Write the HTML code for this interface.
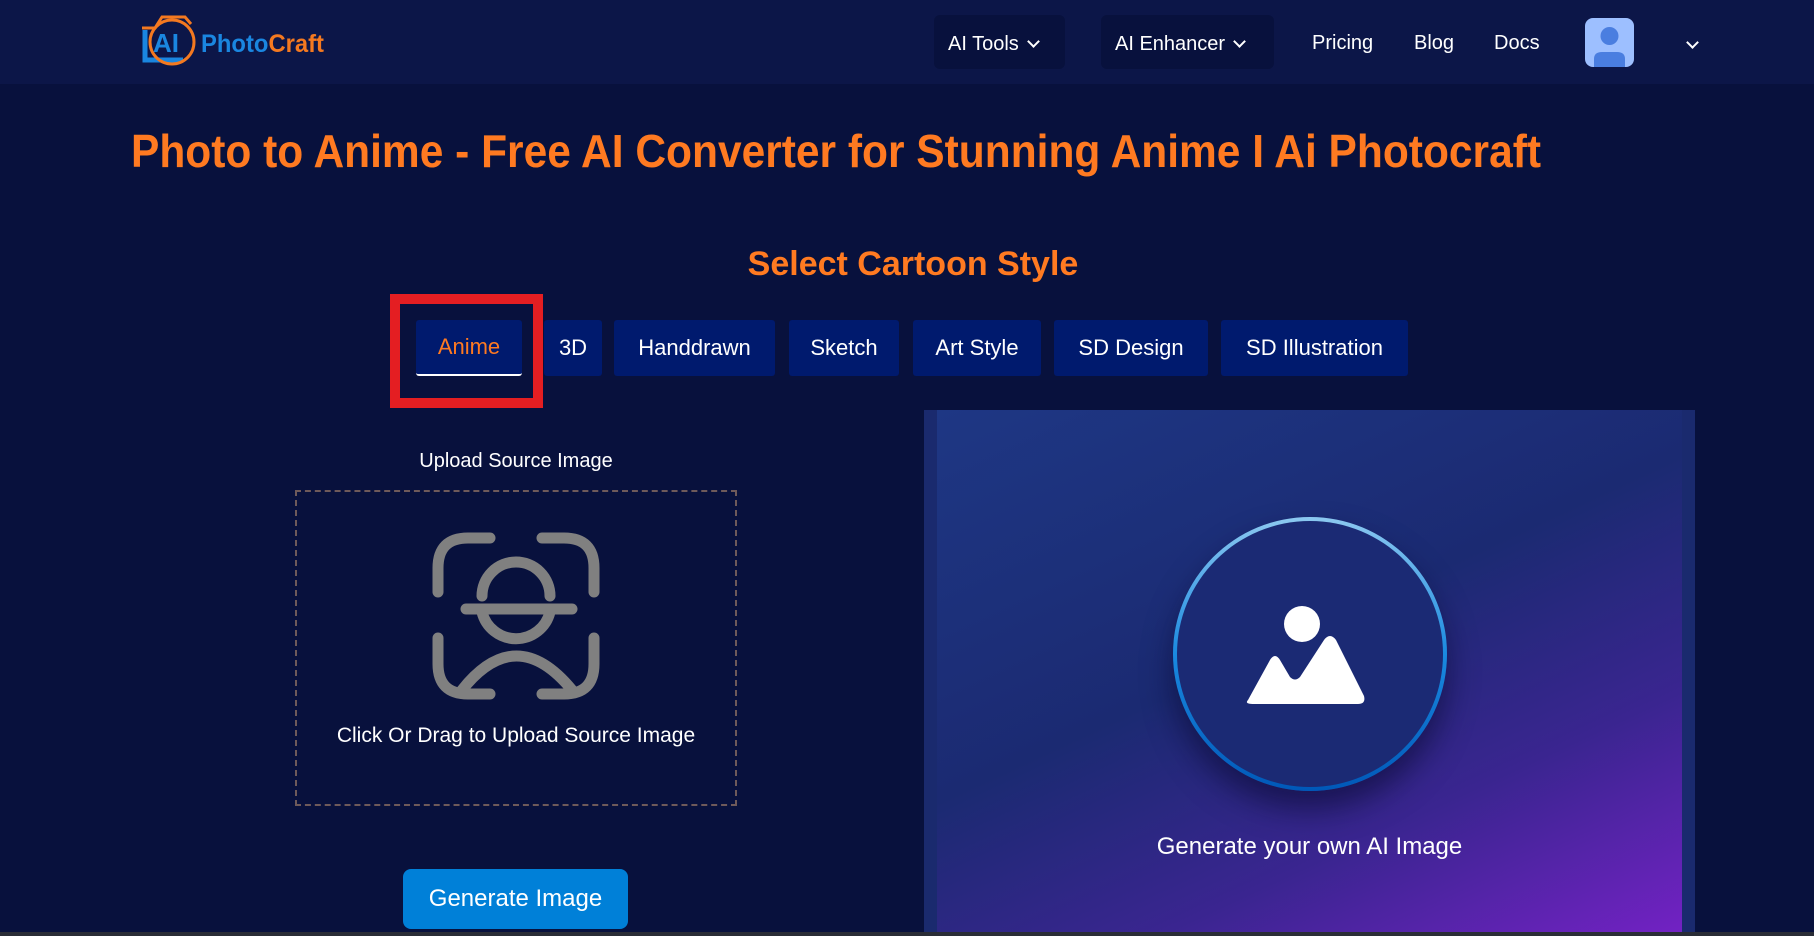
<!DOCTYPE html>
<html><head><meta charset="utf-8"><style>
*{box-sizing:border-box;margin:0;padding:0}
body{width:1814px;height:936px;overflow:hidden;background:#08113d;font-family:"Liberation Sans",Arial,sans-serif;color:#fff;position:relative}
.hdr{position:absolute;left:0;top:0;width:1814px;height:84px;background:#0c1648}
.abs{position:absolute}
.navbox{position:absolute;top:15px;height:54px;background:#08113d;border-radius:6px;font-size:20px;display:flex;align-items:center;padding-left:14px;padding-top:4px}
.navlink{position:absolute;top:32px;font-size:20px}
.chev{display:inline-block;width:9px;height:9px;border-right:2px solid #fff;border-bottom:2px solid #fff;transform:rotate(45deg);margin-left:10px;margin-top:-6px}
.tab{position:absolute;top:320px;height:56px;background:#001a6e;border-radius:3px;font-size:22px;display:flex;align-items:center;justify-content:center}
</style></head><body>
<div class="hdr"></div>
<svg class="abs" style="left:137px;top:8px" width="200" height="60" viewBox="0 0 200 60">
<path d="M8 22 L8 52 L46 52" stroke="#1a86e0" stroke-width="5" fill="none"/>
<path d="M5 20 L18 20 L25 9 L48 9 L54 16" stroke="#f47920" stroke-width="3" fill="none"/>
<circle cx="35" cy="34" r="22" stroke="#f47920" stroke-width="3" fill="none"/>
<text x="16" y="44" font-family="Liberation Sans" font-weight="bold" font-size="26" fill="#1a86e0">AI</text>
<text x="64" y="44" textLength="123" lengthAdjust="spacingAndGlyphs" font-family="Liberation Sans" font-weight="bold" font-size="25" fill="#1a86e0">Photo<tspan fill="#f47920">Craft</tspan></text>
</svg>
<div class="navbox" style="left:934px;width:131px">AI Tools<span class="chev"></span></div>
<div class="navbox" style="left:1101px;width:173px">AI Enhancer<span class="chev"></span></div>
<div class="navlink" style="left:1312px">Pricing</div>
<div class="navlink" style="left:1414px">Blog</div>
<div class="navlink" style="left:1494px">Docs</div>
<svg class="abs" style="left:1585px;top:18px" width="49" height="49" viewBox="0 0 49 49">
<rect width="49" height="49" rx="8" fill="#9dbfff"/>
<circle cx="24.5" cy="18" r="9" fill="#4a7ee0"/>
<path d="M9 49 L9 41 Q9 34 17 34 L32 34 Q40 34 40 41 L40 49Z" fill="#4a7ee0"/>
</svg>
<span class="chev abs" style="left:1678px;top:44px"></span>

<svg class="abs" style="left:128px;top:118px" width="1440" height="70">
<text x="3" y="49" textLength="1410" lengthAdjust="spacingAndGlyphs" font-family="Liberation Sans" font-weight="bold" font-size="46" fill="#ff7a21">Photo to Anime - Free AI Converter for Stunning Anime I Ai Photocraft</text>
</svg>

<div class="abs" style="left:0;width:1826px;top:245px;text-align:center;font-size:34px;font-weight:bold;color:#ff7a21">Select Cartoon Style</div>

<div class="abs" style="left:390px;top:294px;width:153px;height:114px;border:10px solid #e41e22"></div>
<div class="tab" style="left:416px;width:106px;color:#ff7a21;border-bottom:2px solid #fff">Anime</div>
<div class="tab" style="left:544px;width:58px">3D</div>
<div class="tab" style="left:614px;width:161px">Handdrawn</div>
<div class="tab" style="left:789px;width:110px">Sketch</div>
<div class="tab" style="left:913px;width:128px">Art Style</div>
<div class="tab" style="left:1054px;width:154px">SD Design</div>
<div class="tab" style="left:1221px;width:187px">SD Illustration</div>

<div class="abs" style="left:295px;width:442px;top:450px;text-align:center;font-size:20px">Upload Source Image</div>
<div class="abs" style="left:295px;top:490px;width:442px;height:316px;border:2px dashed #6e5a5a"></div>
<svg class="abs" style="left:432px;top:532px" width="168" height="168" viewBox="0 0 168 168" fill="none" stroke="#808080" stroke-width="11" stroke-linecap="round">
<path d="M58 6 H36 Q6 6 6 36 V60"/><path d="M110 6 H132 Q162 6 162 36 V60"/>
<path d="M6 106 V132 Q6 162 36 162 H58"/><path d="M162 106 V132 Q162 162 132 162 H110"/>
<path d="M50 64 A34 34 0 0 1 118 64"/>
<path d="M34 77 H140"/>
<path d="M50 80 A35 35 0 0 0 118 80"/>
<path d="M30 158 Q84 90 140 158"/>
</svg>
<div class="abs" style="left:285px;width:462px;top:724px;text-align:center;font-size:21px">Click Or Drag to Upload Source Image</div>
<div class="abs" style="left:403px;top:869px;width:225px;height:60px;background:#0080d8;border-radius:8px;font-size:24px;display:flex;align-items:center;justify-content:center">Generate Image</div>

<div class="abs" style="left:924px;top:410px;width:771px;height:526px;background:#1a2a6e"></div>
<div class="abs" style="left:937px;top:410px;width:745px;height:526px;background:linear-gradient(155deg,#1e3784 0%,#1b2a72 45%,#3a2590 72%,#7322c4 100%)"></div>
<div class="abs" style="left:1173px;top:517px;width:274px;height:274px;border-radius:50%;padding:4px;background:linear-gradient(180deg,#8cc8f0,#1a8ae0 50%,#0058b8);box-shadow:0 18px 30px rgba(10,10,50,.6)">
<div style="width:100%;height:100%;border-radius:50%;background:#1b2a74"></div></div>
<svg class="abs" style="left:1240px;top:600px" width="140" height="110" viewBox="0 0 140 110">
<circle cx="62" cy="24" r="18" fill="#fff"/>
<path d="M8 100 L30 60 Q35 52 40 60 L50 77 Q55 82 60 77 L84 40 Q90 32 96 40 L124 96 Q126 104 118 104 L14 104 Q4 104 8 100Z" fill="#fff"/>
</svg>
<div class="abs" style="left:924px;width:771px;top:833px;text-align:center;font-size:24px">Generate your own AI Image</div>
<div class="abs" style="left:0;top:932px;width:1814px;height:4px;background:#2a2d36"></div>
</body></html>
